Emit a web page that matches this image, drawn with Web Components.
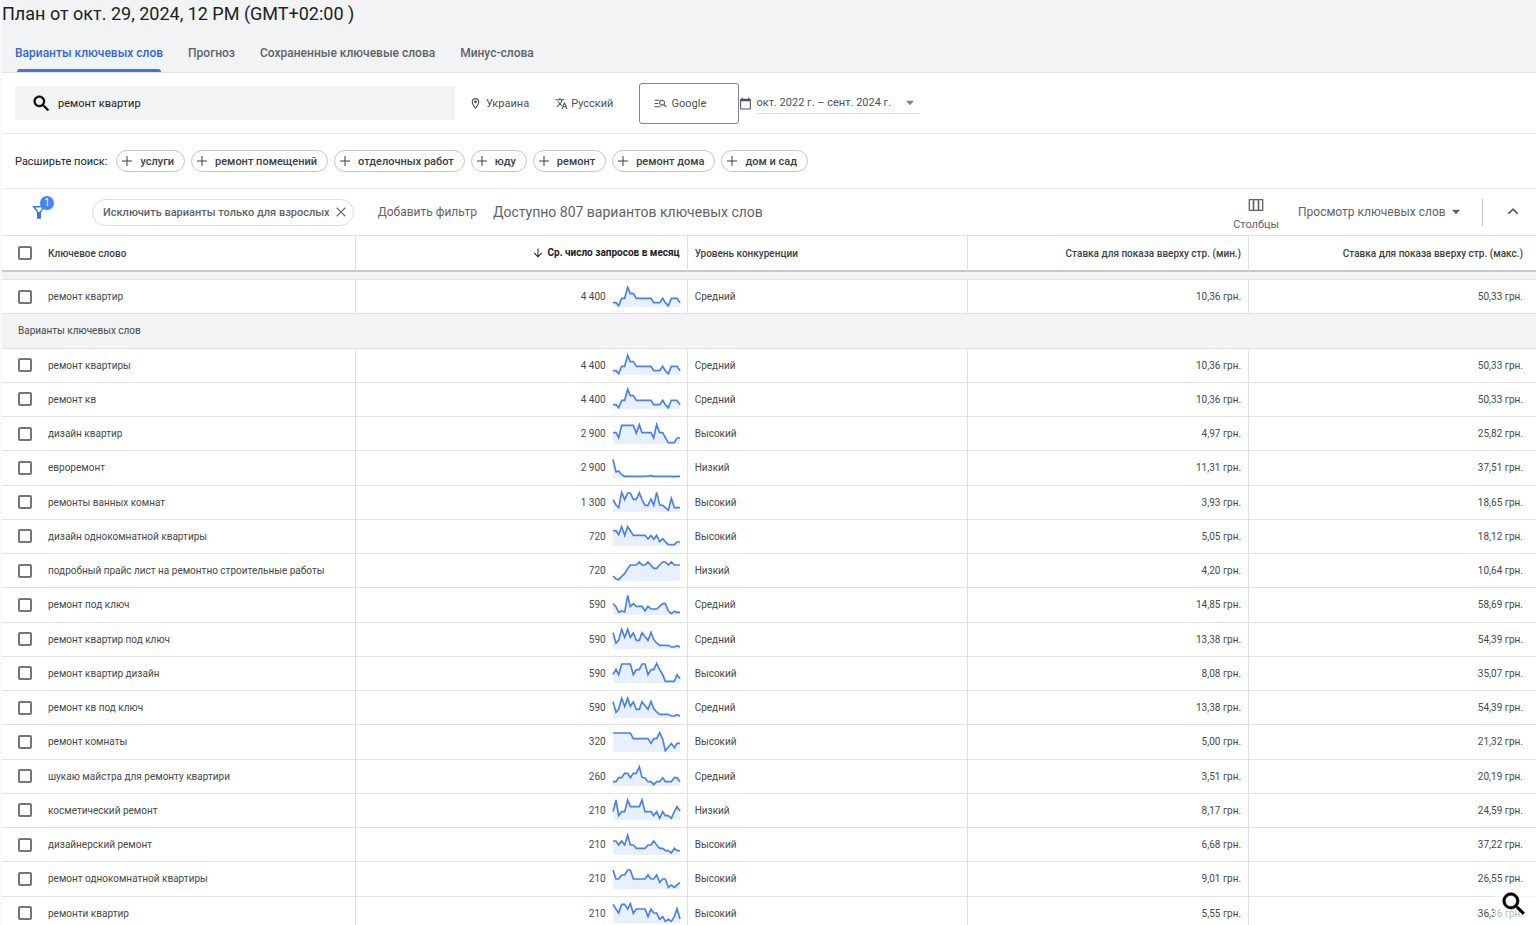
<!DOCTYPE html>
<html lang="ru">
<head>
<meta charset="utf-8">
<title>Планировщик ключевых слов</title>
<style>
    html, body { margin:0; height:100%; }
    body { font-family:Roboto,'Noto Sans',sans-serif; font-size:11px; color:#3c4043;
           background:#fff; overflow:hidden; }
</style>
</head>
<body>
<keyword-planner></keyword-planner>

<script>
const BASE_CSS = `
    *, *::before, *::after { box-sizing:border-box; }
    button, input, select { font:inherit; color:inherit; background:none; border:0;
                            margin:0; padding:0; outline:none; }
    button, select { cursor:pointer; }
    select { appearance:none; }
`;

// ── Icons ─────────────────────────────────────────────────────────────────────

const ICONS = {
    search: '<path d="M15.5 14h-.79l-.28-.27A6.47 6.47 0 0 0 16 9.500 6.500 6.500 0 1 0 9.500 16c1.610 0 3.090-.59 4.230-1.570l.27.28v.79l5 4.990L20.490 19l-4.990-5zm-6 0C7.010 14 5 11.990 5 9.500S7.010 5 9.500 5 14 7.010 14 9.500 11.990 14 9.500 14z" stroke="currentColor" stroke-width=".5"/>',
    place: '<path d="M12 2C8.130 2 5 5.130 5 9c0 5.250 7 13 7 13s7-7.750 7-13c0-3.870-3.130-7-7-7zM7 9c0-2.760 2.240-5 5-5s5 2.240 5 5c0 2.880-2.880 7.190-5 9.880C9.920 16.210 7 11.850 7 9z"/><circle cx="12" cy="9" r="2.500"/>',
    translate: '<path d="M12.870 15.070l-2.540-2.510.03-.03A17.520 17.520 0 0 0 14.070 6H17V4h-7V2H8v2H1v2h11.170C11.500 7.920 10.440 9.750 9 11.350 8.070 10.320 7.300 9.190 6.690 8h-2c.73 1.630 1.730 3.170 2.980 4.560l-5.090 5.020L4 19l5-5 3.110 3.110.76-2.040zM18.500 10h-2L12 22h2l1.120-3h4.750L21 22h2l-4.500-12zm-2.620 7l1.620-4.330L19.120 17h-3.240z"/>',
    network: '<path d="M1 5h9v2H1zM1 11h7v2H1zM1 17h11v2H1z"/><path d="M15 5a5.500 5.500 0 1 0 3.100 10l4 4.200 1.500-1.400-4.100-4.200A5.500 5.500 0 0 0 15 5zm0 2a3.500 3.500 0 1 1 0 7 3.500 3.500 0 0 1 0-7z"/>',
    calendar: '<path d="M20 3h-1V1h-2v2H7V1H5v2H4a2 2 0 0 0-2 2v16c0 1.100.9 2 2 2h16a2 2 0 0 0 2-2V5a2 2 0 0 0-2-2zm0 18H4V8h16v13z"/>',
    plus: '<path d="M11 2h2v9h9v2h-9v9h-2v-9H2v-2h9z"/>',
    close: '<path d="M20 5.400L18.600 4 12 10.600 5.400 4 4 5.400l6.600 6.600L4 18.600 5.400 20l6.600-6.600 6.600 6.600 1.400-1.400-6.600-6.600z"/>',
    filter: '<path d="M2 3h20l-7 9.500V22H9v-9.500zm4.600 2.400L11.200 12h1.600l4.600-6.600z"/>',
    columns: '<path d="M1 3h22v18H1zm2 2v14h4V5zm6.500 0v14h5V5zM17 5v14h4V5z"/>',
    down: '<path d="M5 8l7 8 7-8z"/>',
    collapse: '<path d="M12 6l-8 8 1.900 1.900L12 9.800l6.100 6.100L20 14z"/>',
    sort: '<path d="M11 3h2v14l6-6 1.400 1.400L12 21l-8.400-8.600L5 11l6 6z"/>'
};

class UiIcon extends HTMLElement {
    constructor() {
        super();
        this.attachShadow({ mode: 'open' });
    }

    connectedCallback() {
        const size = this.getAttribute('size') || 14;
        this.shadowRoot.innerHTML = `
            <style>
                :host { display:inline-block; flex:none; width:${size}px; height:${size}px; }
                svg { display:block; width:100%; height:100%; fill:currentColor; }
            </style>
            <svg viewBox="0 0 24 24" aria-hidden="true">${ICONS[this.getAttribute('name')]}</svg>`;
    }
}

// ── Tabs ──────────────────────────────────────────────────────────────────────

class PlanHeader extends HTMLElement {
    constructor() {
        super();
        this.attachShadow({ mode: 'open' });
        this.shadowRoot.innerHTML = `
            <style>
                ${BASE_CSS}
                :host { display:block; background:#f1f3f4; border-bottom:1px solid #e0e2e5; }
                h1 { margin:0; padding-top:2px; font-size:18px; line-height:24px; font-weight:400; color:#202124; }
                nav { display:flex; gap:25px; padding:6px 13px 0; }
                ::slotted(a) { display:flex; flex-direction:column; justify-content:space-between;
                               height:40px; padding-top:13px; box-sizing:border-box;
                               font-size:12px; line-height:16px; font-weight:500; color:#5f6368;
                               text-decoration:none; white-space:nowrap; }
                ::slotted(a[aria-current]) { color:#3367d6; }
                ::slotted(a[aria-current])::after { content:''; height:3px; margin:0 2px;
                               background:#4274e0; border-radius:3px 3px 0 0; }
            </style>
            <h1><slot name="title"></slot></h1>
            <nav><slot></slot></nav>`;
    }
}

// ── Search row ────────────────────────────────────────────────────────────────

class SearchBar extends HTMLElement {
    constructor() {
        super();
        this.attachShadow({ mode: 'open' });
        this.shadowRoot.innerHTML = `
            <style>
                ${BASE_CSS}
                :host { display:flex; align-items:center; height:61px; padding-left:13px;
                        border-bottom:1px solid #e8eaed; color:#4d5156; }
                .search { display:flex; align-items:center; gap:6px; width:440px; height:34px;
                          padding-left:16px; background:#f1f3f4; color:#000; }
                .search input { flex:1; color:#202124; }
                .opt { display:flex; align-items:center; gap:4px; }
                .place { margin-left:14px; }
                .lang { margin-left:26px; gap:3px; }
                .net { margin-left:26px; width:100px; height:41px; padding-left:14px;
                       border:1px solid #80868b; border-radius:3px; }
                .date { display:flex; align-items:center; gap:4px; }
                .date span { display:flex; align-items:center; width:164px; height:22px;
                             border-bottom:1px solid #dadce0; }
                .date select { flex:1; height:20px; }
                .date span ui-icon { margin:0 3px 0 -16px; pointer-events:none; color:#80868b; }
            </style>
            <label class="search"><ui-icon name="search" size="21"></ui-icon>
                <input type="text" value="ремонт квартир" aria-label="Ключевые слова"></label>
            <button class="opt place"><ui-icon name="place" size="13"></ui-icon>Украина</button>
            <button class="opt lang"><ui-icon name="translate" size="13"></ui-icon>Русский</button>
            <button class="opt net"><ui-icon name="network" size="13"></ui-icon>Google</button>
            <label class="date"><ui-icon name="calendar" size="13"></ui-icon>
                <span><select aria-label="Период"><option>окт. 2022 г. – сент. 2024 г.</option></select>
                <ui-icon name="down" size="14"></ui-icon></span></label>`;
    }
}

class SuggestChip extends HTMLElement {
    constructor() {
        super();
        this.attachShadow({ mode: 'open' });
        this.shadowRoot.innerHTML = `
            <style>
                ${BASE_CSS}
                :host { display:block; }
                button { display:flex; align-items:center; gap:7px; height:22px; padding:0 10px 0 4px;
                         border:1px solid #c4c7cc; border-radius:11px; font-weight:500; white-space:nowrap; }
            </style>
            <button><ui-icon name="plus" size="12"></ui-icon><slot></slot></button>`;
    }
}

class SuggestRow extends HTMLElement {
    constructor() {
        super();
        this.attachShadow({ mode: 'open' });
        this.shadowRoot.innerHTML = `
            <style>
                :host { display:flex; align-items:center; gap:6px; height:55px; padding-left:13px;
                        border-bottom:1px solid #e8eaed; box-sizing:border-box; }
                .label { margin-right:3px; color:#202124; }
            </style>
            <span class="label">Расширьте поиск:</span><slot></slot>`;
    }
}

// ── Filter row ────────────────────────────────────────────────────────────────

class FilterBar extends HTMLElement {
    constructor() {
        super();
        this.attachShadow({ mode: 'open' });
        this.shadowRoot.innerHTML = `
            <style>
                ${BASE_CSS}
                :host { display:flex; align-items:center; height:46px; padding:0 15px 0 29px;
                        font-size:12px; color:#5f6368; }
                .funnel { position:relative; color:#3b78e7; height:16px; }
                .count { position:absolute; left:9px; top:-8px; width:14px; height:14px; border-radius:50%;
                         background:#4285f4; color:#fff; font-size:10px; line-height:14px; text-align:center; }
                .chip { display:flex; align-items:center; gap:4px; height:27px; margin-left:45px; padding:0 5px 0 10px;
                        border:1px solid #dadce0; border-radius:14px; font-size:11px; font-weight:500; }
                .chip button { height:14px; }
                .add { margin-left:24px; }
                .total { margin:0 auto 0 16px; font-size:14px; }
                .cols { display:flex; flex-direction:column; align-items:center; gap:5px; font-size:11px; line-height:13px; padding-top:3px; }
                .view { display:flex; align-items:center; margin-left:19px; }
                .view select { padding-right:15px; }
                .view ui-icon { margin-left:-12px; pointer-events:none; }
                .rule { width:1px; height:27px; margin:0 22px 0 19px; background:#bdc1c6; }
                .fold { height:16px; }
            </style>
            <button class="funnel" aria-label="Фильтры"><ui-icon name="filter" size="16"></ui-icon><span class="count">1</span></button>
            <div class="chip">Исключить варианты только для взрослых
                <button aria-label="Удалить"><ui-icon name="close" size="14"></ui-icon></button></div>
            <button class="add">Добавить фильтр</button>
            <span class="total">Доступно 807 вариантов ключевых слов</span>
            <button class="cols"><ui-icon name="columns" size="16"></ui-icon>Столбцы</button>
            <label class="view"><select aria-label="Вид"><option>Просмотр ключевых слов</option></select>
                <ui-icon name="down" size="14"></ui-icon></label>
            <span class="rule"></span>
            <button class="fold" aria-label="Свернуть"><ui-icon name="collapse" size="16"></ui-icon></button>`;
    }
}

// ── Table ─────────────────────────────────────────────────────────────────────

const UNDER_KEY = '11 43 33 1 25 1 25 12 34 34 11 23 34 10 32 42 49 49 49 49 54 54 50 54';
const REPAIR = '47 47 56 34 34 1 20 20 34 34 34 34 34 34 47 47 47 34 47 56 34 34 34 47';

// keyword, searches, competition, low bid, high bid, 24 months of trend (0 = top, 60 = bottom)
const ROWS = [
    ['ремонт квартир', '4 400', 'Средний', '10,36', '50,33', REPAIR],
    null,
    ['ремонт квартиры', '4 400', 'Средний', '10,36', '50,33', REPAIR],
    ['ремонт кв', '4 400', 'Средний', '10,36', '50,33', REPAIR],
    ['дизайн квартир', '2 900', 'Высокий', '4,97', '25,82', '26 26 41 4 4 4 4 4 28 2 26 26 26 26 42 2 26 26 41 56 56 56 42 42'],
    ['евроремонт', '2 900', 'Низкий', '11,31', '37,51', '4 42 39 50 55 55 55 55 55 55 55 55 54 53 55 55 55 55 55 55 55 56 55 55'],
    ['ремонты ванных комнат', '1 300', 'Высокий', '3,93', '18,65', '23 39 47 1 23 3 3 22 22 2 23 40 40 21 40 1 39 40 47 55 19 47 47 47'],
    ['дизайн однокомнатной квартиры', '720', 'Высокий', '5,05', '18,12', '14 14 26 2 28 2 14 28 28 28 28 28 39 28 40 28 47 38 47 56 56 56 48 48'],
    ['подробный прайс лист на ремонтно строительные работы', '720', 'Низкий', '4,20', '10,64', '45 53 56 46 38 23 12 12 12 3 12 12 3 13 22 22 12 3 3 12 3 12 12 12'],
    ['ремонт под ключ', '590', 'Средний', '14,85', '58,69', '26 35 52 48 51 1 35 26 34 34 34 48 34 42 42 42 34 26 26 48 56 49 52 52'],
    ['ремонт квартир под ключ', '590', 'Средний', '13,38', '54,39', UNDER_KEY],
    ['ремонт квартир дизайн', '590', 'Высокий', '8,08', '35,07', '35 19 35 3 3 3 3 35 20 20 3 3 35 20 20 1 20 35 55 55 55 55 35 47'],
    ['ремонт кв под ключ', '590', 'Средний', '13,38', '54,39', UNDER_KEY],
    ['ремонт комнаты', '320', 'Высокий', '5,00', '21,32', '3 3 3 3 3 3 3 20 20 20 20 20 20 34 20 20 2 22 56 46 34 47 34 34'],
    ['шукаю майстра для ремонту квартири', '260', 'Средний', '3,51', '20,19', '47 47 35 35 22 22 35 22 22 2 34 36 47 47 56 47 47 35 47 47 47 35 35 47'],
    ['косметический ремонт', '210', 'Низкий', '8,17', '24,59', '35 0 47 35 35 0 20 20 20 20 0 35 35 35 47 35 55 35 47 47 55 35 20 33'],
    ['дизайнерский ремонт', '210', 'Высокий', '6,68', '37,22', '18 18 30 18 30 1 30 30 40 40 40 40 30 30 18 30 40 40 47 47 54 40 47 47'],
    ['ремонт однокомнатной квартиры', '210', 'Высокий', '9,01', '26,55', '3 30 30 18 18 3 3 30 30 30 30 30 18 30 30 18 40 30 30 55 48 55 48 41'],
    ['ремонти квартир', '210', 'Высокий', '5,55', '36,36', '4 18 30 4 4 18 2 31 18 18 18 18 41 18 30 30 49 41 55 49 55 41 17 48']
];

class TrendLine extends HTMLElement {
    constructor() {
        super();
        this.attachShadow({ mode: 'open' });
    }

    connectedCallback() {
        const ys = this.getAttribute('points').split(' ').map(Number);
        const step = 201 / (ys.length - 1);
        const line = ys.map((y, i) => `${Math.round(i * step)},${y}`).join(' ');
        this.shadowRoot.innerHTML = `
            <style>
                :host { display:block; width:67px; height:20px; }
                svg { display:block; width:100%; height:100%; overflow:visible; }
            </style>
            <svg viewBox="0 0 201 60" aria-hidden="true">
                <polygon points="0,60 ${line} 201,60" fill="#e8f0fe"/>
                <polyline points="${line}" fill="none" stroke="#4a80ec" stroke-width="5"/>
            </svg>`;
    }
}

class KeywordTable extends HTMLElement {
    constructor() {
        super();
        this.attachShadow({ mode: 'open' });
    }

    connectedCallback() {
        const body = ROWS.map((row, i) => row ? this._row(row, i)
            : '<tr class="section"><td colspan="5">Варианты ключевых слов</td></tr>').join('');

        this.shadowRoot.innerHTML = `
            <style>
                ${BASE_CSS}
                :host { display:block; border-top:1px solid #e0e2e5; font-size:10px; }
                /* the last row runs a little under the bottom edge */
                table { width:100%; height:calc(100% + 6px); table-layout:fixed; border-collapse:separate; border-spacing:0; }
                th, td { padding:0 7px; text-align:left; border-right:1px solid #dfe1e5; border-bottom:1px solid #e0e2e5;
                         white-space:nowrap; font-weight:400; }
                th { height:36px; font-weight:500; border-bottom:2px solid #c6c8ca; }
                th:last-child, td:last-child { border-right:0; padding-right:13px; }
                tr > :first-child { padding-left:16px; }
                .num { text-align:right; }
                .sorted { font-weight:700; color:#202124; }
                .sorted ui-icon { vertical-align:-3px; margin-right:3px; }
                .gap td { height:8px; background:#f1f3f4; }
                .section td { background:#f1f3f4; }
                label, .trend { display:flex; align-items:center; }
                label { gap:16px; }
                .trend { justify-content:flex-end; gap:7px; }
                tbody td { line-height:33px; color:#45494d; }
                input[type=checkbox] { appearance:none; flex:none; width:14px; height:14px; border:2px solid #757575; border-radius:2px; }
                input[type=checkbox]:checked { background:#4285f4; border-color:#4285f4; }
            </style>
            <table>
                <colgroup>
                    <col style="width:23.1%"><col style="width:21.6%"><col style="width:18.3%"><col style="width:18.3%"><col>
                </colgroup>
                <thead>
                    <tr>
                        <th><label><input type="checkbox" id="chk-all">Ключевое слово</label></th>
                        <th class="num sorted"><ui-icon name="sort" size="12"></ui-icon>Ср. число запросов в месяц</th>
                        <th>Уровень конкуренции</th>
                        <th class="num">Ставка для показа вверху стр. (мин.)</th>
                        <th class="num">Ставка для показа вверху стр. (макс.)</th>
                    </tr>
                    <tr class="gap"><td colspan="5"></td></tr>
                </thead>
                <tbody>${body}</tbody>
            </table>`;

        this.shadowRoot.querySelector('#chk-all').addEventListener('change', (e) => {
            this.shadowRoot.querySelectorAll('tbody input').forEach(cb => {
                cb.checked = e.target.checked;
            });
        });
    }

    _row([keyword, searches, competition, low, high, trend], i) {
        return `<tr>
            <td><label><input type="checkbox" data-index="${i}">${keyword}</label></td>
            <td><div class="trend">${searches}<trend-line points="${trend}"></trend-line></div></td>
            <td>${competition}</td>
            <td class="num">${low} грн.</td>
            <td class="num">${high} грн.</td>
        </tr>`;
    }
}

// ── Page ──────────────────────────────────────────────────────────────────────

class KeywordPlanner extends HTMLElement {
    constructor() {
        super();
        this.attachShadow({ mode: 'open' });
        this.shadowRoot.innerHTML = `
            <style>
                ${BASE_CSS}
                :host { display:flex; flex-direction:column; height:100vh; border-left:2px solid #f8f9fa;
                        box-sizing:border-box; overflow:hidden; }
                keyword-table { flex:1; min-height:0; box-sizing:border-box; }
                search-bar, filter-bar { flex:none; box-sizing:border-box; }
                .find { position:fixed; right:0; bottom:0; width:42px; height:40px; padding-right:2px;
                        background:linear-gradient(transparent 10px,rgba(255,255,255,.6) 10px); color:#000; }
            </style>
            <plan-header>
                <span slot="title">План от окт. 29, 2024, 12 PM (GMT+02:00 )</span>
                <a href="#ideas" aria-current="page">Варианты ключевых слов</a>
                <a href="#forecast">Прогноз</a>
                <a href="#saved">Сохраненные ключевые слова</a>
                <a href="#negative">Минус-слова</a>
            </plan-header>
            <search-bar></search-bar>
            <suggest-row>
                <suggest-chip>услуги</suggest-chip>
                <suggest-chip>ремонт помещений</suggest-chip>
                <suggest-chip>отделочных работ</suggest-chip>
                <suggest-chip>юду</suggest-chip>
                <suggest-chip>ремонт</suggest-chip>
                <suggest-chip>ремонт дома</suggest-chip>
                <suggest-chip>дом и сад</suggest-chip>
            </suggest-row>
            <filter-bar></filter-bar>
            <keyword-table></keyword-table>
            <button class="find" aria-label="Поиск"><ui-icon name="search" size="30"></ui-icon></button>`;
    }
}

customElements.define('ui-icon', UiIcon);
customElements.define('plan-header', PlanHeader);
customElements.define('search-bar', SearchBar);
customElements.define('suggest-chip', SuggestChip);
customElements.define('suggest-row', SuggestRow);
customElements.define('filter-bar', FilterBar);
customElements.define('trend-line', TrendLine);
customElements.define('keyword-table', KeywordTable);
customElements.define('keyword-planner', KeywordPlanner);
</script>
</body>
</html>
